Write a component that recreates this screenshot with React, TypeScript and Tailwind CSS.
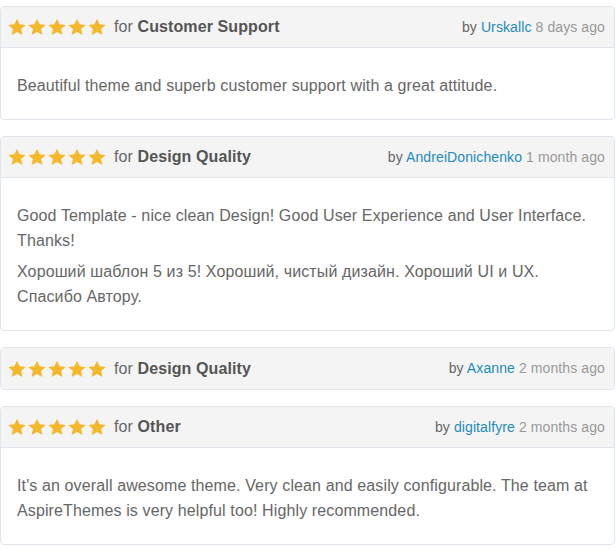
import React from "react";

const Star = () => (
  <svg width="18" height="18" viewBox="0.5 0.5 23 22" className="shrink-0">
    <path
      d="M12 0.8l3.3 7.1 7.8 0.9-5.8 5.3 1.6 7.7L12 17.9l-6.9 3.9 1.6-7.7L0.9 8.8l7.8-0.9z"
      fill="#f6b82b"
    />
  </svg>
);

type Review = {
  category: string;
  user: string;
  when: string;
  body?: string[];
};

const reviews: Review[] = [
  {
    category: "Customer Support",
    user: "Urskallc",
    when: "8 days ago",
    body: ["Beautiful theme and superb customer support with a great attitude."],
  },
  {
    category: "Design Quality",
    user: "AndreiDonichenko",
    when: "1 month ago",
    body: [
      "Good Template - nice clean Design! Good User Experience and User Interface. Thanks!",
      "Хороший шаблон 5 из 5! Хороший, чистый дизайн. Хороший UI и UX. Спасибо Автору.",
    ],
  },
  { category: "Design Quality", user: "Axanne", when: "2 months ago" },
  {
    category: "Other",
    user: "digitalfyre",
    when: "2 months ago",
    body: [
      "It's an overall awesome theme. Very clean and easily configurable. The team at AspireThemes is very helpful too! Highly recommended.",
    ],
  },
];

export default function App() {
  return (
    <div
      className="w-[616px] bg-white pt-[6px]"
      style={{ fontFamily: '"Liberation Sans", Arial, sans-serif' }}
    >
      {reviews.map((r, i) => (
        <div
          key={i}
          className="mb-[16px] mr-[1px] overflow-hidden rounded-[4px] border border-[#dfe5ec] bg-white"
        >
          <div
            className={`flex h-[41px] items-center justify-between bg-[#f4f4f4] pl-[7px] pr-[9px] ${
              r.body ? "border-b border-[#dfe5ec]" : ""
            }`}
          >
            <div className="flex items-center">
              <div className="flex items-center gap-[2px]">
                <Star />
                <Star />
                <Star />
                <Star />
                <Star />
              </div>
              <span className="ml-[8px] text-[16px] tracking-[0.1px] text-[#666]">
                for <span className="font-bold text-[#555]">{r.category}</span>
              </span>
            </div>
            <div className="text-[14px] tracking-[0.1px] text-[#666]">
              by <span className="text-[#1e8bbf]">{r.user}</span>{" "}
              <span className="text-[#999]">{r.when}</span>
            </div>
          </div>
          {r.body && (
            <div className="px-4 pb-[21px] pt-[25px] text-[16px] leading-[25px] tracking-[0.12px] text-[#666]">
              {r.body.map((p, j) => (
                <p key={j} className={j > 0 ? "mt-[6px]" : ""}>
                  {p}
                </p>
              ))}
            </div>
          )}
        </div>
      ))}
    </div>
  );
}
